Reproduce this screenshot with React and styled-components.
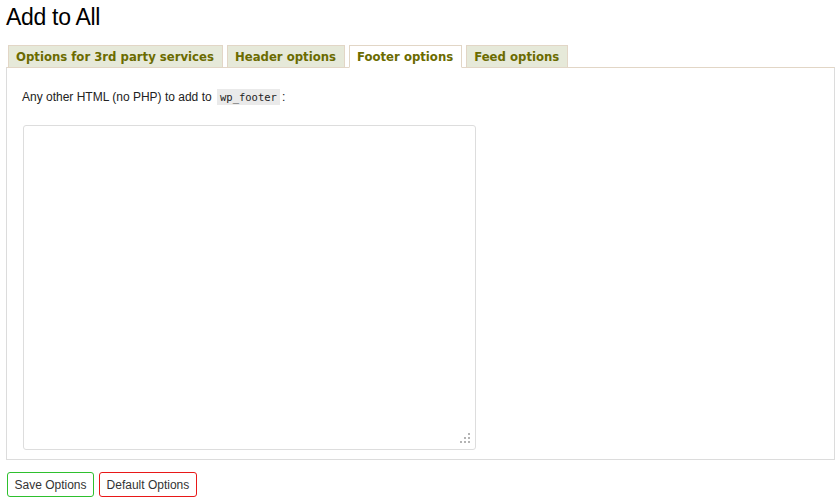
import React, { useState } from 'react';
import styled, { createGlobalStyle } from 'styled-components';

const GlobalStyle = createGlobalStyle`
  body {
    margin: 0;
    background: #fff;
    font-family: "Liberation Sans", Arial, sans-serif;
  }
`;

const Page = styled.div`
  padding: 4px 6px 0 6px;
  width: 829px;
`;

const Title = styled.h1`
  margin: 0 0 15px 0;
  font-size: 23px;
  font-weight: normal;
  color: #000;
  line-height: 26px;
  letter-spacing: -0.3px;
`;

const TabBar = styled.ul`
  display: flex;
  gap: 4px;
  margin: 0;
  padding: 0 0 0 2px;
  list-style: none;
  position: relative;
  z-index: 1;
`;

const Tab = styled.li`
  height: 21px;
  padding: 0 8px 0 7px;
  display: flex;
  align-items: center;
  font-family: "DejaVu Sans", Verdana, sans-serif;
  font-weight: bold;
  font-size: 11.7px;
  color: #6b6b00;
  background: ${(p) => (p.$active ? '#fff' : '#e6e9d9')};
  border: 1px solid #e2d6c6;
  border-bottom: 1px solid ${(p) => (p.$active ? '#fff' : '#e2d6c6')};
  cursor: pointer;
`;

const Panel = styled.div`
  box-sizing: border-box;
  margin-top: -1px;
  border: 1px solid #dcdcdc;
  border-top-color: #e2d6c6;
  height: 393px;
  padding: 20px 15px 0 15px;
`;

const Label = styled.p`
  margin: 0 0 19px 0;
  font-size: 12px;
  color: #222;
  line-height: 18px;
`;

const Code = styled.code`
  font-family: "DejaVu Sans Mono", monospace;
  font-size: 10.5px;
  background: #eaeaea;
  padding: 2px 3px;
  margin: 0 2px;
`;

const Field = styled.div`
  position: relative;
  width: 453px;
  margin-left: 1px;
`;

const TextArea = styled.textarea`
  display: block;
  width: 453px;
  height: 325px;
  box-sizing: border-box;
  border: 1px solid #dddddd;
  border-radius: 3px;
  resize: none;
  outline: none;
`;

const Grip = styled.svg`
  position: absolute;
  right: 6px;
  bottom: 7px;
  pointer-events: none;
`;

const Actions = styled.div`
  display: flex;
  gap: 5px;
  margin-top: 12px;
  padding-left: 1px;
`;

const Button = styled.button`
  height: 25px;
  padding: 0 6.5px;
  background: #fff;
  border: 1px solid ${(p) => p.$tone};
  border-radius: 3px;
  font-family: "Liberation Sans", Arial, sans-serif;
  font-size: 12px;
  color: #333;
  cursor: pointer;
`;

const tabs = ['Options for 3rd party services', 'Header options', 'Footer options', 'Feed options'];

export default function App() {
  const [active, setActive] = useState(2);
  const [html, setHtml] = useState('');

  return (
    <Page>
      <GlobalStyle />
      <Title>Add to All</Title>
      <TabBar>
        {tabs.map((t, i) => (
          <Tab key={t} $active={i === active} onClick={() => setActive(i)}>
            {t}
          </Tab>
        ))}
      </TabBar>
      <Panel>
        <Label>
          Any other HTML (no PHP) to add to <Code>wp_footer</Code>:
        </Label>
        <Field>
          <TextArea value={html} onChange={(e) => setHtml(e.target.value)} />
          <Grip width="10" height="10" viewBox="0 0 10 10">
            <g fill="#b4b4b4">
              <rect x="8" y="0" width="2" height="2" />
              <rect x="4" y="4" width="2" height="2" />
              <rect x="8" y="4" width="2" height="2" />
              <rect x="0" y="8" width="2" height="2" />
              <rect x="4" y="8" width="2" height="2" />
              <rect x="8" y="8" width="2" height="2" />
            </g>
          </Grip>
        </Field>
      </Panel>
      <Actions>
        <Button $tone="#2ec02e">Save Options</Button>
        <Button $tone="#e81818">Default Options</Button>
      </Actions>
    </Page>
  );
}
